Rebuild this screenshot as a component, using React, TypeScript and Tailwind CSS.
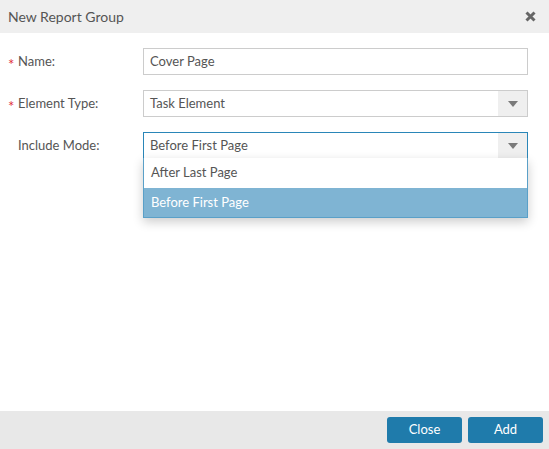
const font = { fontFamily: "Lato, 'Liberation Sans', sans-serif" };

function Caret() {
  return (
    <svg width="10" height="6" viewBox="0 0 10 6">
      <path d="M0 0 L10 0 L5 6 Z" fill="#7a7a7a" />
    </svg>
  );
}

function Row({ label, required, children }: { label: string; required?: boolean; children: React.ReactNode }) {
  return (
    <div className="flex items-center">
      <div className="flex w-[143px] items-center text-[13px] text-[#555]">
        <span className="w-[17px] pl-[8px] pt-[5px] text-[15px] leading-none text-[#e0303a]">{required ? "*" : ""}</span>
        <span className="pl-[1px]">{label}</span>
      </div>
      <div className="flex-1">{children}</div>
    </div>
  );
}

export default function App() {
  return (
    <div className="flex h-[449px] w-[549px] flex-col bg-white" style={font}>
      <div className="flex h-[33px] items-center justify-between bg-[#efefef] pl-[8px] pr-[13px]">
        <span className="text-[14px] text-[#555]">New Report Group</span>
        <svg width="11" height="11" viewBox="0 0 11 11">
          <path d="M1.5 1.5 L9.5 9.5 M9.5 1.5 L1.5 9.5" stroke="#666" strokeWidth="3" strokeLinecap="butt" />
        </svg>
      </div>

      <div className="flex-1 pr-[21px] pt-[15px]">
        <div className="flex flex-col gap-[15px]">
          <Row label="Name:" required>
            <div className="flex h-[27px] items-center border border-[#cccccc] px-[6px] text-[13px] text-[#555]">Cover Page</div>
          </Row>
          <Row label="Element Type:" required>
            <div className="flex h-[27px] items-center border border-[#cccccc] text-[13px] text-[#555]">
              <span className="flex-1 px-[6px]">Task Element</span>
              <span className="flex h-full w-[29px] items-center justify-center bg-[#efefef]">
                <Caret />
              </span>
            </div>
          </Row>
          <Row label="Include Mode:">
            <div className="relative">
              <div className="flex h-[27px] items-center border border-[#2a86b8] text-[13px] text-[#555]">
                <span className="flex-1 px-[6px]">Before First Page</span>
                <span className="flex h-full w-[29px] items-center justify-center bg-[#efefef]">
                  <Caret />
                </span>
              </div>
              <div className="absolute left-0 right-0 top-[26px] border border-t-0 border-[#5aa0c8] bg-white text-[13px] shadow-[0_4px_10px_rgba(0,0,0,0.2)]">
                <div className="flex h-[30px] items-center px-[7px] text-[#555]">After Last Page</div>
                <div className="flex h-[29px] items-center bg-[#7fb4d3] px-[7px] text-white">Before First Page</div>
              </div>
            </div>
          </Row>
        </div>
      </div>

      <div className="flex h-[38px] items-center justify-end gap-[6px] bg-[#e8e8e8] pr-[6px]">
        <button className="h-[26px] w-[75px] rounded-[3px] bg-[#1f7bab] text-[13px] text-white">Close</button>
        <button className="h-[26px] w-[75px] rounded-[3px] bg-[#1f7bab] text-[13px] text-white">Add</button>
      </div>
    </div>
  );
}
